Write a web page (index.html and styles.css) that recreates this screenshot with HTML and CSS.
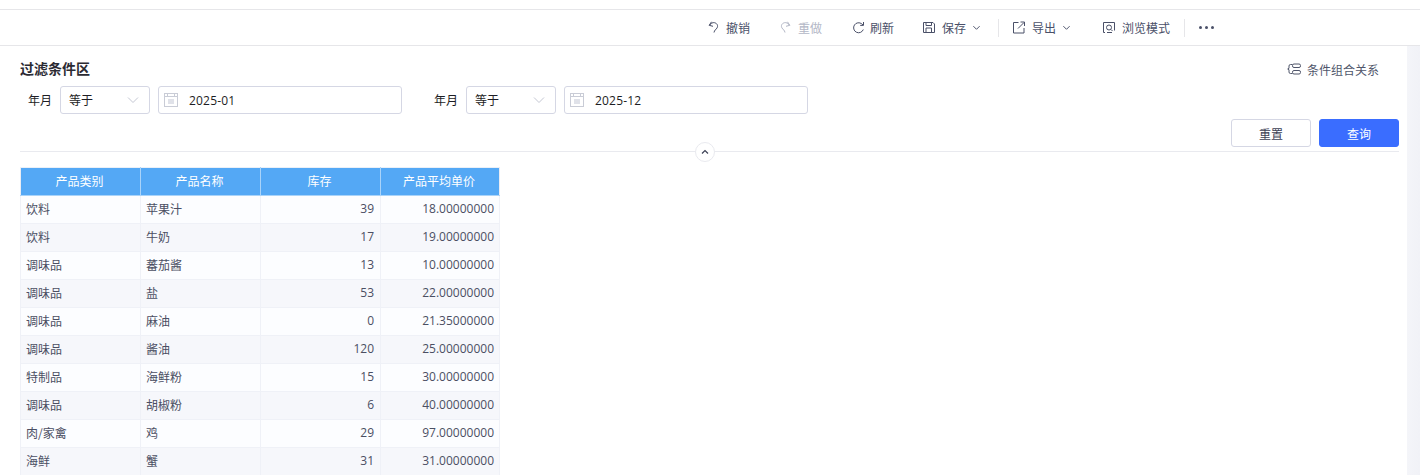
FILE: index.html
```
<!DOCTYPE html>
<html lang="zh">
<head>
<meta charset="utf-8">
<title>过滤条件区</title>
<link rel="stylesheet" href="styles.css">
</head>
<body>
<div class="topbar"></div>
<div class="toolbar">
  <button class="tool t-undo"><svg class="ic" viewBox="0 0 13 13"><path d="M3.500 .8 1.200 4.300l3.800 1M1.500 4.300C2.800 2.200 4.800 1.300 6.500 1.700c2.800.6 3.800 3.300 2.500 5.300-.9 1.400-2.600 2.200-3 4.500"/></svg>撤销</button>
  <button class="tool t-redo off"><svg class="ic" viewBox="0 0 13 13"><path d="M7.500 .8 9.800 4.300 6 5.300M9.500 4.300C8.200 2.200 6.200 1.300 4.500 1.700 1.700 2.300.7 5 2 7c.9 1.400 2.600 2.200 3 4.500"/></svg>重做</button>
  <button class="tool t-refresh"><svg class="ic" viewBox="0 0 13 13"><path d="M11.300 8.500A5 5 0 1 1 9.800 2.900L11 4M11.500 1v3.400H8.200"/></svg>刷新</button>
  <button class="tool t-save"><svg class="ic" viewBox="0 0 13 13"><path d="M.5 1.500h9.500l1.500 1.500v8.500H.5zM3 1.500v3h5.500v-3M3 11.500v-4.500h5.500v4.500"/></svg>保存<svg class="caret" viewBox="0 0 10 10"><path d="M1.500 3.500 5 7l3.500-3.500"/></svg></button>
  <span class="vline"></span>
  <button class="tool t-export"><svg class="ic" viewBox="0 0 13 13"><path d="M5.500 1.500H.5v10.500h10.500V7M5 7.500 11 1.500M7.500 1h4v4"/></svg>导出<svg class="caret" viewBox="0 0 10 10"><path d="M1.500 3.500 5 7l3.500-3.500"/></svg></button>
  <button class="tool t-view"><svg class="ic" viewBox="0 0 13 13"><path d="M2 11.500H.5v-10h11v8M4 11.500h5"/><circle cx="6" cy="6.500" r="2.500"/><path d="m8 8.500 1.500 1.500"/></svg>浏览模式</button>
  <span class="vline v2"></span>
  <span class="more"><i></i><i></i><i></i></span>
</div>
<div class="content">
  <main class="main">
    <div class="filter-head">
      <h2 class="filter-title">过滤条件区</h2>
      <span class="relation"><svg class="rel-ic" viewBox="0 0 14 14"><rect x="5.500" y="2" width="8" height="3.500" rx="1.500"/><rect x="5.500" y="8.500" width="8" height="3.500" rx="1.500"/><path d="M5.500 2.500H3.500a1.500 1.500 0 0 0-1.500 1.500v2.300L.7 7 2 7.700V10a1.500 1.500 0 0 0 1.500 1.500h2"/></svg>条件组合关系</span>
    </div>
    <div class="filter-row">
      <div class="cond">
        <span class="cond-label">年月</span>
        <div class="select"><span>等于</span><svg class="sel-caret" viewBox="0 0 12 8"><path d="M1 1.500 6 6.500l5-5"/></svg></div>
        <div class="date">
          <svg class="cal" viewBox="0 0 14 14"><rect x=".5" y=".5" width="13" height="13"/><path d="M.5 3.500h13M3.500.5v3M10.500.5v3"/><rect class="m" x="4" y="6" width="6" height="5"/></svg>
          <span>2025-01</span>
        </div>
      </div>
      <div class="cond">
        <span class="cond-label">年月</span>
        <div class="select"><span>等于</span><svg class="sel-caret" viewBox="0 0 12 8"><path d="M1 1.500 6 6.500l5-5"/></svg></div>
        <div class="date">
          <svg class="cal" viewBox="0 0 14 14"><rect x=".5" y=".5" width="13" height="13"/><path d="M.5 3.500h13M3.500.5v3M10.500.5v3"/><rect class="m" x="4" y="6" width="6" height="5"/></svg>
          <span>2025-12</span>
        </div>
      </div>
    </div>
    <div class="actions">
      <button class="btn">重置</button>
      <button class="btn primary">查询</button>
    </div>
    <div class="divider"><span class="collapse"><svg viewBox="0 0 10 10"><path d="M2 6.500 5 3.500l3 3"/></svg></span></div>
    <table class="grid">
      <colgroup><col class="c1"><col class="c2"><col class="c3"><col class="c4"></colgroup>
      <thead><tr><th>产品类别</th><th>产品名称</th><th>库存</th><th>产品平均单价</th></tr></thead>
      <tbody>
        <tr><td>饮料</td><td>苹果汁</td><td class="num">39</td><td class="num">18.00000000</td></tr>
        <tr><td>饮料</td><td>牛奶</td><td class="num">17</td><td class="num">19.00000000</td></tr>
        <tr><td>调味品</td><td>蕃茄酱</td><td class="num">13</td><td class="num">10.00000000</td></tr>
        <tr><td>调味品</td><td>盐</td><td class="num">53</td><td class="num">22.00000000</td></tr>
        <tr><td>调味品</td><td>麻油</td><td class="num">0</td><td class="num">21.35000000</td></tr>
        <tr><td>调味品</td><td>酱油</td><td class="num">120</td><td class="num">25.00000000</td></tr>
        <tr><td>特制品</td><td>海鲜粉</td><td class="num">15</td><td class="num">30.00000000</td></tr>
        <tr><td>调味品</td><td>胡椒粉</td><td class="num">6</td><td class="num">40.00000000</td></tr>
        <tr><td>肉/家禽</td><td>鸡</td><td class="num">29</td><td class="num">97.00000000</td></tr>
        <tr><td>海鲜</td><td>蟹</td><td class="num">31</td><td class="num">31.00000000</td></tr>
      </tbody>
    </table>
  </main>
  <div class="scroll"></div>
</div>
</body>
</html>
```
FILE: styles.css
```
* { box-sizing: border-box; }
html, body { margin: 0; height: 100%; overflow: hidden; }
body {
  background: #fff;
  color: #2b2f3d;
  font-family: "Noto Sans CJK SC", "Open Sans", sans-serif;
  font-size: 12px;
}
svg { fill: none; stroke: currentColor; stroke-width: 1; flex: none; }
.topbar { height: 10px; border-bottom: 1px solid #e6e6e9; }
.toolbar {
  height: 36px;
  border-bottom: 1px solid #e6e6e9;
  display: flex;
  align-items: center;
  padding-right: 206px;
  justify-content: flex-end;
  color: #4a5068;
}
.tool {
  display: flex;
  align-items: center;
  gap: 5px;
  border: 0;
  background: none;
  padding: 0;
  font: inherit;
  color: #4a5068;
  line-height: 16px;
}
.tool.off { color: #b3b7c6; }
.ic { width: 13px; height: 13px; }
.caret { width: 9px; height: 9px; margin-left: 1px; color: #3f4560; }
.t-undo { margin-right: 30px; }
.t-redo { margin-right: 30px; }
.t-refresh { margin-right: 29px; }
.t-save { margin-right: 17px; }
.t-save .ic { margin-right: 1px; }
.t-export { margin-right: 32px; }
.t-export .ic { margin-right: 1px; }
.t-view .ic { margin-right: 1px; }
.vline { width: 1px; height: 18px; background: #e6e6e9; margin-right: 14px; }
.v2 { margin: 0 14px; }
.more { display: flex; gap: 3px; }
.more i { width: 3px; height: 3px; border-radius: 50%; background: #4a5068; }
.content { display: flex; height: 429px; }
.main { flex: 1; padding: 12px 8px 0 20px; min-width: 0; }
.scroll { width: 13px; background: linear-gradient(90deg, #f4f5f9, #f1f2f7); }
.filter-head { display: flex; justify-content: space-between; align-items: center; height: 20px; }
.filter-title { margin: 0; font-size: 14px; font-weight: 700; color: #2b2b33; line-height: 20px; }
.relation { display: flex; align-items: center; gap: 6px; color: #50566b; margin-right: 20px; position: relative; top: 1px; }
.rel-ic { width: 14px; height: 14px; }
.filter-row { display: flex; gap: 24px; margin-top: 8px; }
.cond { display: flex; align-items: center; width: 382px; }
.cond-label { width: 40px; padding-left: 8px; color: #1d1d24; padding-bottom: 1px; }
.select, .date {
  height: 28px;
  border: 1px solid #d5d7e4;
  border-radius: 3px;
  display: flex;
  align-items: center;
  color: #1d1d24;
}
.select { width: 90px; padding: 0 10px 1px 8px; justify-content: space-between; }
.sel-caret { width: 12px; height: 8px; color: #c4c7d3; margin-right: 0; }
.date { width: 244px; margin-left: 8px; padding-left: 5px; gap: 11px; font-family: "Open Sans", sans-serif; letter-spacing: .2px; }
.cal { width: 14px; height: 14px; color: #c9ccd6; }
.cal .m { fill: #e0e2e9; stroke: none; }
.actions { display: flex; justify-content: flex-end; gap: 8px; margin-top: 5px; }
.btn {
  width: 80px;
  height: 28px;
  border: 1px solid #d5d7e4;
  border-radius: 3px;
  background: #fff;
  color: #3c4155;
  font: inherit;
  padding: 0;
}
.btn.primary { background: #3a6dff; border-color: #3a6dff; color: #fff; }
.divider { height: 1px; background: #e9eaef; margin-top: 4px; position: relative; }
.collapse {
  position: absolute;
  left: 675px;
  top: -9px;
  width: 20px;
  height: 20px;
  border: 1px solid #e9eaef;
  border-radius: 50%;
  background: #fff;
  display: flex;
  align-items: center;
  justify-content: center;
  color: #3c4155;
}
.collapse svg { width: 10px; height: 10px; stroke-width: 1.200; }
.grid {
  margin-top: 15px;
  border-collapse: collapse;
  table-layout: fixed;
  width: 480px;
  color: #4b4f63;
  font-size: 12px;
}
.c1, .c2, .c3 { width: 120px; }
.grid th {
  height: 28px;
  background: #54a8f5;
  color: #fff;
  font-weight: 400;
  padding: 0 2px 2px 0;
  border: 1px solid #a9d3f9;
  border-top-color: #eaf0f8;
  border-bottom-color: #a9d3f9;
}
.grid th:first-child { border-left-color: #e9ecf4; }
.grid th:last-child { border-right-color: #e9ecf4; }
.grid td {
  height: 28px;
  padding: 0 5px 2px;
  border: 1px solid #eff1f7;
}
.grid td.num:nth-child(3) { padding-right: 6px; }
.grid tbody tr:nth-child(odd) td { background: #fcfdff; }
.grid tbody tr:nth-child(even) td { background: #f6f7fb; }
.num { text-align: right; font-family: "Open Sans", sans-serif; }
```
